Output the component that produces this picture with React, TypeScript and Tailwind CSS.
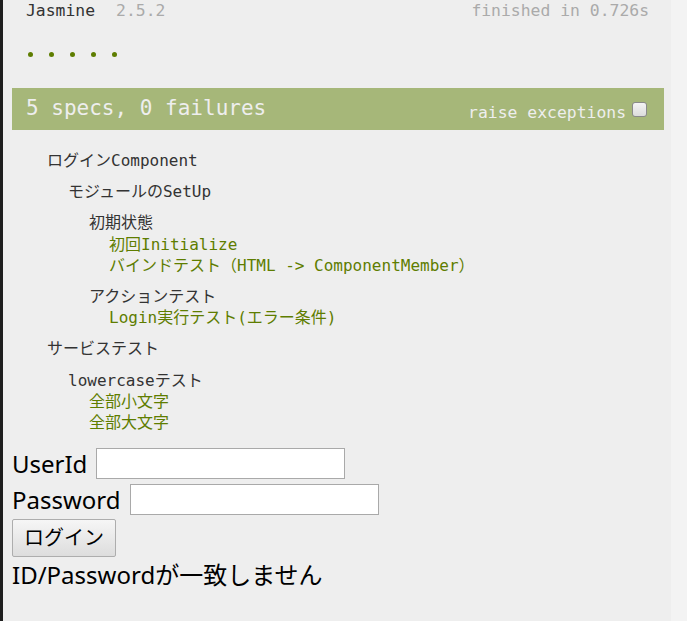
import React from "react";

const mono = { fontFamily: '"DejaVu Sans Mono", "Noto Sans CJK JP", monospace' };
const sans = { fontFamily: '"Noto Sans", "Noto Sans CJK JP", sans-serif' };

function Line({ indent, mt, green, children }: { indent: string; mt: string; green?: boolean; children: React.ReactNode }) {
  return (
    <div className={`h-[21px] leading-[21px] whitespace-nowrap ${indent} ${mt} ${green ? "text-[#5e7d00]" : "text-[#333]"}`}>
      {children}
    </div>
  );
}

export default function App() {
  return (
    <div className="flex min-h-[621px] w-full">
      <div className="w-[3px] shrink-0 bg-[#1e1e1e]" />
      <div className="w-[668px] shrink-0 bg-[#eeeeee] pl-[9px] pr-[7px]">
        <div style={mono} className="text-[16.4px]">
          <div className="flex h-[22px] items-center justify-between pl-[14px] pr-[15px]">
            <div className="flex items-center">
              <span className="text-[#333]">Jasmine</span>
              <span className="ml-[21px] text-[#aaa]">2.5.2</span>
            </div>
            <span className="text-[#aaa]">finished in 0.726s</span>
          </div>
          <div className="mt-[29px] flex h-[7px] items-center gap-[16px] pl-[16px]">
            <span className="h-[5px] w-[5px] rounded-full bg-[#5e7d00]" />
            <span className="h-[5px] w-[5px] rounded-full bg-[#5e7d00]" />
            <span className="h-[5px] w-[5px] rounded-full bg-[#5e7d00]" />
            <span className="h-[5px] w-[5px] rounded-full bg-[#5e7d00]" />
            <span className="h-[5px] w-[5px] rounded-full bg-[#5e7d00]" />
          </div>
          <div className="mt-[30px] flex h-[42px] items-center justify-between bg-[#a6b779] pl-[14px] pr-[17px] text-[#eeeeee]">
            <span className="text-[21px]">5 specs, 0 failures</span>
            <div className="mt-[8px] flex items-center">
              <span>raise exceptions</span>
              <span className="ml-[6px] -mt-[6px] h-[15px] w-[15px] rounded-[3px] border border-[#8a8a8a] bg-gradient-to-b from-[#f4f4f4] to-[#dcdcdc]" />
            </div>
          </div>
          <div className="pt-[9.5px] text-[16px]">
            <Line indent="pl-[35px]" mt="mt-[10px]">ログインComponent</Line>
            <Line indent="pl-[56px]" mt="mt-[10px]">モジュールのSetUp</Line>
            <Line indent="pl-[77px]" mt="mt-[10px]">初期状態</Line>
            <Line indent="pl-[97px]" mt="mt-[1px]" green>初回Initialize</Line>
            <Line indent="pl-[97px]" mt="mt-0" green>バインドテスト（HTML -&gt; ComponentMember）</Line>
            <Line indent="pl-[77px]" mt="mt-[10px]">アクションテスト</Line>
            <Line indent="pl-[97px]" mt="mt-0" green>Login実行テスト(エラー条件)</Line>
            <Line indent="pl-[35px]" mt="mt-[10px]">サービステスト</Line>
            <Line indent="pl-[56px]" mt="mt-[11px]">lowercaseテスト</Line>
            <Line indent="pl-[77px]" mt="mt-0" green>全部小文字</Line>
            <Line indent="pl-[77px]" mt="mt-0" green>全部大文字</Line>
          </div>
        </div>
        <div style={sans} className="-ml-[9px] pt-[13px] text-[24px] text-black">
          <div className="flex h-[36px] items-center gap-[9px] pl-[9px]">
            <span className="leading-none">UserId</span>
            <input className="h-[31px] w-[249px] border border-[#a9a9a9] bg-white" />
          </div>
          <div className="flex h-[36px] items-center gap-[9px] pl-[9px]">
            <span className="leading-none">Password</span>
            <input type="password" className="h-[31px] w-[249px] border border-[#a9a9a9] bg-white" />
          </div>
          <div className="pl-[9px]">
            <button className="h-[38px] w-[104px] rounded-[2px] border border-[#adadad] bg-gradient-to-b from-[#f6f6f6] to-[#dddddd] text-[20px] leading-none text-black">
              ログイン
            </button>
          </div>
          <div className="mt-[3px] pl-[9px] leading-[30px]">ID/Passwordが一致しません</div>
        </div>
      </div>
      <div className="flex-1 bg-[#f3f3f3]" />
    </div>
  );
}
